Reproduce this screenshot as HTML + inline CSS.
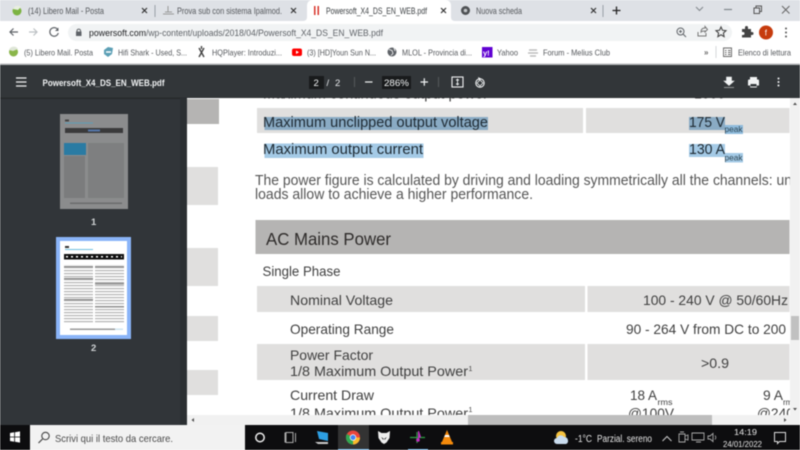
<!DOCTYPE html>
<html><head><meta charset="utf-8"><style>
html,body{margin:0;padding:0;width:800px;height:450px;overflow:hidden;background:#fff}
svg{display:block;filter:blur(.45px)}
text{font-family:"Liberation Sans",sans-serif}
</style></head><body>
<svg xmlns="http://www.w3.org/2000/svg" width="800" height="450" viewBox="0 0 800 450">
<defs><clipPath id="doc"><rect x="187" y="98" width="603" height="317"/></clipPath>
<pattern id="rows" width="4" height="3" patternUnits="userSpaceOnUse"><rect width="4" height="3" fill="#fff"/><rect width="4" height="1.200" fill="#b3b3b3"/></pattern></defs>
<rect width="800" height="450" fill="#fff"/>
<!-- tab strip -->
<rect width="800" height="21" fill="#dee1e6"/>
<path d="M303 21q4 0 4-4V6q0-6 6-6h132q6 0 6 6v11q0 4 4 4z" fill="#fff"/>
<circle cx="17" cy="11" r="4.500" fill="#7cb342"/><path d="M13 9a5 5 0 0 1 8-2l-3 3z" fill="#e8efe0"/>
<text x="28" y="14" font-size="9" fill="#55585c" textLength="76" lengthAdjust="spacingAndGlyphs">(14) Libero Mail - Posta</text>
<path d="M142 8l5 5m0-5l-5 5" stroke="#333" stroke-width="1.200"/>
<rect x="154.500" y="5" width="1" height="12" fill="#9aa0a6"/>
<path d="M163 14h11M165 12h7M168 6v6" stroke="#999" stroke-width="1"/>
<text x="177" y="14" font-size="9" fill="#55585c" textLength="105" lengthAdjust="spacingAndGlyphs">Prova sub con sistema Ipalmod.</text>
<path d="M291 8l5 5m0-5l-5 5" stroke="#333" stroke-width="1.200"/>
<rect x="314" y="6" width="1.500" height="9" fill="#d9342b"/><rect x="317.500" y="6" width="1.500" height="9" fill="#d9342b"/>
<text x="326" y="14" font-size="9" fill="#3c4043" textLength="101" lengthAdjust="spacingAndGlyphs">Powersoft_X4_DS_EN_WEB.pdf</text>
<path d="M441 8l5 5m0-5l-5 5" stroke="#333" stroke-width="1.200"/>
<circle cx="465.500" cy="10.500" r="4.500" fill="#4e5154"/><circle cx="465.500" cy="10.500" r="1.800" fill="#c4c7ca"/>
<text x="476" y="14" font-size="9" fill="#55585c" textLength="46" lengthAdjust="spacingAndGlyphs">Nuova scheda</text>
<path d="M591 8l5 5m0-5l-5 5" stroke="#333" stroke-width="1.200"/>
<rect x="602.500" y="5" width="1" height="12" fill="#9aa0a6"/>
<path d="M612.500 10.500h8M616.500 6.500v8" stroke="#222" stroke-width="1.300"/>
<path d="M696 7l3.500 3.500L703 7" stroke="#80868b" fill="none"/>
<path d="M724 9.500h8" stroke="#80868b" stroke-width="1.200"/>
<path d="M754 8h5.500v5.500H754zM756 8V6h5.500v5.500h-2" stroke="#555" fill="none"/>
<path d="M782 6l7.500 7.500m0-7.500L782 13.500" stroke="#666" fill="none"/>
<!-- address bar -->
<rect y="21" width="800" height="20" fill="#fff"/>
<rect x="68" y="24" width="664" height="17" rx="8.500" fill="#f1f3f4"/>
<path d="M18 32h-8m3.500-3.500L10 32l3.500 3.500" stroke="#5f6368" stroke-width="1.200" fill="none"/>
<path d="M29 32h8m-3.500-3.500L37 32l-3.500 3.500" stroke="#bcc0c4" stroke-width="1.200" fill="none"/>
<path d="M58 30a4.300 4.300 0 1 0 .3 3" stroke="#5f6368" stroke-width="1.200" fill="none"/><path d="M58.500 27.500v3.500H55z" fill="#5f6368"/>
<rect x="76" y="31.500" width="5.500" height="4.500" fill="#5f6368"/><path d="M77 31.500v-1a1.800 1.800 0 0 1 3.500 0v1" stroke="#5f6368" fill="none"/>
<text x="89" y="36" font-size="9.500" fill="#202124" textLength="57" lengthAdjust="spacingAndGlyphs">powersoft.com</text>
<text x="146" y="36" font-size="9.500" fill="#5f6368" textLength="237" lengthAdjust="spacingAndGlyphs">/wp-content/uploads/2018/04/Powersoft_X4_DS_EN_WEB.pdf</text>
<circle cx="680.500" cy="31.500" r="3.500" stroke="#5f6368" fill="none"/><path d="M683 34l3 3M679 31.500h3M680.500 30v3" stroke="#5f6368" fill="none"/>
<path d="M698 32v4h8v-3M701 32c0-3 2-4 4-4v-1.500l2.500 3-2.500 2.500V31c-2 0-3 0-4 1z" stroke="#777" fill="none"/>
<path d="M721 27l1.500 3.300 3.500.4-2.600 2.400.7 3.500-3.100-1.800-3.100 1.800.7-3.500-2.600-2.400 3.500-.4z" stroke="#444" stroke-width="1.100" fill="none"/>
<path d="M742 29h3v-1.500a1.500 1.500 0 0 1 3 0V29h3v3h1a1.500 1.500 0 0 1 0 3h-1v2.500h-9V35h1a1.500 1.500 0 0 0 0-3h-1z" fill="#444"/>
<circle cx="766" cy="32.500" r="7" fill="#c63b0d"/><text x="764.800" y="35.500" font-size="8" fill="#fff">f</text>
<circle cx="786" cy="28.500" r="1" fill="#555"/><circle cx="786" cy="32.500" r="1" fill="#555"/><circle cx="786" cy="36.500" r="1" fill="#555"/>
<!-- bookmarks -->
<rect y="41" width="800" height="23" fill="#fff"/><rect y="63.500" width="800" height="1.500" fill="#b8babc"/>
<circle cx="13.500" cy="52" r="4.500" fill="#8ab64a"/><path d="M9 50a5 5 0 0 1 9-1l-5 2z" fill="#dfe6d8"/>
<text x="24" y="55.500" font-size="8.500" fill="#55585c" textLength="69" lengthAdjust="spacingAndGlyphs">(5) Libero Mail. Posta</text>
<path d="M104 50l4-3 5 1-1 6-4 3-4-3z" fill="#5c9fb5"/><path d="M106 52h5" stroke="#fff" stroke-width="1.500"/>
<text x="118" y="55.500" font-size="8.500" fill="#55585c" textLength="69" lengthAdjust="spacingAndGlyphs">Hifi Shark - Used, S...</text>
<path d="M199 48l5 9m0-9l-5 9M201.500 46v3" stroke="#444" stroke-width="1.400"/>
<text x="212" y="55.500" font-size="8.500" fill="#55585c" textLength="70" lengthAdjust="spacingAndGlyphs">HQPlayer: Introduzi...</text>
<rect x="292" y="48.500" width="10" height="7.500" rx="2" fill="#f00"/><path d="M296 50.500v3.500l3-1.700z" fill="#fff"/>
<text x="307" y="55.500" font-size="8.500" fill="#55585c" textLength="69" lengthAdjust="spacingAndGlyphs">(3) [HD]Youn Sun N...</text>
<circle cx="392" cy="52" r="4.500" fill="#5f6368"/><path d="M389 49.500l3 1 1 3-2 2M394 48l1 3" stroke="#fff" fill="none" stroke-width=".8"/>
<text x="402" y="55.500" font-size="8.500" fill="#55585c" textLength="70" lengthAdjust="spacingAndGlyphs">MLOL - Provincia di...</text>
<rect x="482" y="47" width="10.500" height="10.500" fill="#6001d2"/><text x="483" y="55.500" font-size="7.500" font-weight="bold" fill="#fff">y!</text>
<text x="497" y="55.500" font-size="8.500" fill="#55585c" textLength="21" lengthAdjust="spacingAndGlyphs">Yahoo</text>
<path d="M529 50h8M528 53h10M530 56h6" stroke="#b5b5b5" stroke-width="1.200"/>
<text x="543" y="55.500" font-size="8.500" fill="#55585c" textLength="67" lengthAdjust="spacingAndGlyphs">Forum - Melius Club</text>
<text x="704" y="55" font-size="8" font-weight="bold" fill="#666">»</text>
<rect x="715.500" y="46" width="1" height="12" fill="#d5d7da"/>
<path d="M723.500 48h8v8.500h-8zM725 50.500h1.500M725 52.500h1.500M725 54.500h1.500M728 50.500h2.500M728 52.500h2.500M728 54.500h2.500" stroke="#666" fill="none" stroke-width=".9"/>
<text x="738" y="55.500" font-size="8.500" fill="#55585c" textLength="53" lengthAdjust="spacingAndGlyphs">Elenco di lettura</text>
<!-- pdf toolbar -->
<rect y="65" width="800" height="33" fill="#323639"/>
<path d="M16 78h10.500M16 82h10.500M16 86h10.500" stroke="#f1f3f4" stroke-width="1.300"/>
<text x="42.500" y="86" font-size="9" font-weight="bold" fill="#f1f3f4" textLength="122" lengthAdjust="spacingAndGlyphs">Powersoft_X4_DS_EN_WEB.pdf</text>
<rect x="309" y="76" width="15" height="13" fill="#191b1c"/>
<text x="313.500" y="86" font-size="9.500" fill="#f1f3f4">2</text>
<text x="326.500" y="86" font-size="9.500" fill="#e8eaed">/</text>
<text x="335" y="86" font-size="9.500" fill="#e8eaed">2</text>
<rect x="354" y="77" width="1" height="10" fill="#55595c"/>
<path d="M365 82h7.500" stroke="#f1f3f4" stroke-width="1.200"/>
<rect x="382" y="76" width="29" height="13" fill="#191b1c"/>
<text x="384" y="86" font-size="9.500" fill="#f1f3f4" textLength="25" lengthAdjust="spacingAndGlyphs">286%</text>
<path d="M420.500 82h7.500M424.300 78.200v7.600" stroke="#f1f3f4" stroke-width="1.200"/>
<rect x="438" y="77" width="1" height="10" fill="#55595c"/>
<rect x="452" y="77" width="11" height="10" stroke="#f1f3f4" stroke-width="1.100" fill="none"/><path d="M457.500 78.500v7M456 80h3M456 84h3" stroke="#f1f3f4" stroke-width=".9"/>
<circle cx="480" cy="83" r="4.200" stroke="#f1f3f4" stroke-width="1.100" fill="none"/><path d="M480 80l-3 3 3 3 3-3z" stroke="#f1f3f4" stroke-width=".8" fill="none"/><path d="M478 77l3 1.500-2 2z" fill="#f1f3f4"/>
<path d="M726.500 77h5v4h2.500l-5 4.500-5-4.500h2.500zM724 87.500h10" fill="#f1f3f4" stroke="#f1f3f4" stroke-width=".6"/>
<path d="M750 77h7v2.500h-7z" fill="#f1f3f4"/><path d="M748 80.500a1 1 0 0 1 1-1h9a1 1 0 0 1 1 1v5h-2.200v2h-6.600v-2H748z" fill="#f1f3f4"/><rect x="750.500" y="84" width="6" height="2.500" fill="#323639"/>
<circle cx="778.500" cy="78.500" r="1" fill="#f1f3f4"/><circle cx="778.500" cy="82" r="1" fill="#f1f3f4"/><circle cx="778.500" cy="85.500" r="1" fill="#f1f3f4"/>
<!-- sidebar -->
<rect y="98" width="187" height="327" fill="#313539"/>
<rect x="0" y="97.500" width="800" height="1.500" fill="#26292b"/>
<rect x="60" y="114" width="68" height="95" fill="#8b8c8d"/>
<rect x="65" y="128" width="58" height="5" fill="#3a3a3b"/><rect x="88" y="129.500" width="12" height="2" fill="#5577aa"/>
<rect x="64" y="143" width="22" height="12" fill="#2a7ba3"/>
<rect x="64" y="156" width="21" height="42" fill="#7b7c7d"/><rect x="88" y="143" width="36" height="55" fill="#7e7f80"/>
<rect x="65" y="119.500" width="4" height="2" fill="#444"/><rect x="65" y="122.500" width="28" height="1" fill="#5e9db8"/>
<rect x="70" y="202.500" width="52" height="1.500" fill="#6b6c6d"/>
<text x="91" y="225" font-size="9.500" font-weight="bold" fill="#cfd2d4">1</text>
<rect x="56" y="237" width="75" height="102" fill="#8ab4f8"/>
<rect x="60" y="241" width="67" height="94" fill="#fff"/>
<rect x="64" y="254" width="60" height="5.500" fill="#111"/>
<path d="M66 256.800h56" stroke="#fff" stroke-width="1.500" stroke-dasharray="2 3"/>
<rect x="65" y="246" width="4" height="2" fill="#333"/><rect x="65" y="249" width="28" height="1" fill="#6fbfe0"/>
<rect x="64" y="265" width="29" height="59" fill="url(#rows)"/><rect x="95" y="265" width="29" height="59" fill="url(#rows)"/>
<g fill="#8f8f8f"><rect x="64" y="266" width="29" height="1.500"/><rect x="95" y="266" width="29" height="1.500"/><rect x="64" y="278" width="29" height="1.500"/><rect x="64" y="299" width="29" height="1.500"/><rect x="95" y="283" width="29" height="1.500"/><rect x="95" y="306" width="29" height="1.500"/></g>
<rect x="70" y="328.500" width="45" height="1.500" fill="#999"/><rect x="115" y="328.500" width="8" height="1.500" fill="#cfe6f2"/>
<text x="91" y="351" font-size="9.500" font-weight="bold" fill="#cfd2d4">2</text>
<!-- document -->
<g clip-path="url(#doc)">
<rect x="187" y="98" width="603" height="317" fill="#fff"/>
<rect x="187" y="99" width="32" height="25" fill="#b5b4b3"/>
<rect x="187" y="167" width="31" height="38" fill="#e0dfde"/>
<rect x="187" y="248" width="31" height="38" fill="#e0dfde"/>
<rect x="187" y="316" width="31" height="25" fill="#e0dfde"/>
<rect x="187" y="370" width="31" height="25" fill="#e0dfde"/>
<text x="263" y="98.500" font-size="14" fill="#444" textLength="225" lengthAdjust="spacingAndGlyphs">Maximum continuous output power</text>
<text x="694" y="98.500" font-size="14" fill="#444">1000</text>
<rect x="257" y="108" width="326" height="25" fill="#e0dfde"/>
<rect x="586" y="108" width="203.500" height="25" fill="#e0dfde"/>
<rect x="264.500" y="117" width="223.500" height="13" fill="#8aabc4"/>
<text x="263" y="127" font-size="14.500" fill="#1e2a33" textLength="225" lengthAdjust="spacingAndGlyphs">Maximum unclipped output voltage</text>
<rect x="689" y="117" width="36" height="13" fill="#8aabc4"/><rect x="725" y="125" width="18" height="9" fill="#8fbbdc"/>
<text x="689" y="127" font-size="14.500" fill="#1e2a33" textLength="36" lengthAdjust="spacingAndGlyphs">175 V</text>
<text x="724.500" y="132" font-size="8.500" fill="#2c4452" textLength="18" lengthAdjust="spacingAndGlyphs">peak</text>
<rect x="264.500" y="143.500" width="159" height="14.500" fill="#a4cae6"/><rect x="689" y="144" width="36" height="13" fill="#a4cae6"/><rect x="725" y="153" width="18" height="9.500" fill="#a4cae6"/>
<text x="263" y="154" font-size="14.500" fill="#1e2a33" textLength="160" lengthAdjust="spacingAndGlyphs">Maximum output current</text>
<text x="689" y="154" font-size="14.500" fill="#1e2a33" textLength="36" lengthAdjust="spacingAndGlyphs">130 A</text>
<text x="724.500" y="160.500" font-size="8.500" fill="#2c4452" textLength="18" lengthAdjust="spacingAndGlyphs">peak</text>
<text x="255" y="185" font-size="14.500" fill="#555" textLength="537" lengthAdjust="spacingAndGlyphs">The power figure is calculated by driving and loading symmetrically all the channels: un</text>
<text x="255" y="199" font-size="14.500" fill="#555" textLength="278" lengthAdjust="spacingAndGlyphs">loads allow to achieve a higher performance.</text>
<rect x="255.500" y="220" width="534" height="34" fill="#b5b4b3"/>
<text x="266" y="245" font-size="17.500" fill="#2e2b2a" textLength="125" lengthAdjust="spacingAndGlyphs">AC Mains Power</text>
<text x="262.500" y="276" font-size="14" fill="#3f3f3f" textLength="78" lengthAdjust="spacingAndGlyphs">Single Phase</text>
<rect x="257" y="286" width="328" height="26" fill="#e0dfde"/><rect x="587.500" y="286" width="202" height="26" fill="#e0dfde"/>
<text x="290" y="305" font-size="14" fill="#3f3f3f" textLength="103" lengthAdjust="spacingAndGlyphs">Nominal Voltage</text>
<text x="643" y="305" font-size="14" fill="#3f3f3f" textLength="145" lengthAdjust="spacingAndGlyphs">100 - 240 V @ 50/60Hz</text>
<text x="290" y="334" font-size="14" fill="#3f3f3f" textLength="104" lengthAdjust="spacingAndGlyphs">Operating Range</text>
<text x="626" y="334" font-size="14" fill="#3f3f3f" textLength="160" lengthAdjust="spacingAndGlyphs">90 - 264 V from DC to 200</text>
<rect x="257" y="344" width="328" height="36" fill="#e0dfde"/><rect x="587.500" y="344" width="202" height="36" fill="#e0dfde"/>
<text x="290" y="360" font-size="14" fill="#3f3f3f" textLength="83" lengthAdjust="spacingAndGlyphs">Power Factor</text>
<text x="290" y="376" font-size="14" fill="#3f3f3f" textLength="178" lengthAdjust="spacingAndGlyphs">1/8 Maximum Output Power</text>
<text x="468.500" y="371" font-size="7" fill="#3f3f3f">1</text>
<text x="701" y="368" font-size="14" fill="#3f3f3f" textLength="28" lengthAdjust="spacingAndGlyphs">&gt;0.9</text>
<text x="290" y="400" font-size="14" fill="#3f3f3f" textLength="84" lengthAdjust="spacingAndGlyphs">Current Draw</text>
<text x="290" y="418" font-size="14" fill="#3f3f3f" textLength="178" lengthAdjust="spacingAndGlyphs">1/8 Maximum Output Power</text>
<text x="468.500" y="412" font-size="7" fill="#3f3f3f">1</text>
<text x="630" y="400" font-size="14" fill="#3f3f3f" textLength="27" lengthAdjust="spacingAndGlyphs">18 A</text>
<text x="657.500" y="405" font-size="8" fill="#3f3f3f" textLength="15" lengthAdjust="spacingAndGlyphs">rms</text>
<text x="628" y="418" font-size="14" fill="#3f3f3f" textLength="46" lengthAdjust="spacingAndGlyphs">@100V</text>
<text x="763" y="400" font-size="14" fill="#3f3f3f" textLength="20" lengthAdjust="spacingAndGlyphs">9 A</text>
<text x="783" y="405" font-size="8" fill="#3f3f3f">rms</text>
<text x="757" y="418" font-size="14" fill="#3f3f3f" textLength="46" lengthAdjust="spacingAndGlyphs">@240V</text>
</g>
<rect x="180" y="98" width="7" height="327" fill="#2b2f32"/>
<!-- scrollbars -->
<rect x="790" y="98" width="10" height="327" fill="#f1f1f1"/>
<rect x="791" y="316" width="8" height="24" fill="#c1c1c1"/>
<path d="M795 102.500l2 2.500h-4z" fill="#505050"/>
<path d="M795 410.500l2-2.500h-4z" fill="#505050"/>
<rect x="187" y="415" width="603" height="10" fill="#f1f1f1"/>
<rect x="468" y="415" width="244" height="10" fill="#bdbdbd"/>
<path d="M191.500 420l2.500-2v4z" fill="#505050"/>
<path d="M786.500 420l-2.500-2v4z" fill="#505050"/>
<!-- taskbar -->
<rect y="425" width="800" height="25" fill="#0d0d0f"/>
<path d="M10 433l4.200-.7v4.300H10zM15 432.200l5-.8v5.200h-5zM10 437.400h4.200v4.300L10 441zM15 437.400h5v5.200l-5-.8z" fill="#fff"/>
<rect x="30" y="425" width="215" height="25" fill="#f2f2f2"/>
<circle cx="45.500" cy="436" r="3.700" stroke="#444" stroke-width="1.100" fill="none"/><path d="M42.500 439l-4 4" stroke="#444" stroke-width="1.200"/>
<text x="55" y="442" font-size="10.500" fill="#4a4a4a" textLength="118" lengthAdjust="spacingAndGlyphs">Scrivi qui il testo da cercare.</text>
<circle cx="260" cy="437.500" r="4.200" stroke="#eee" stroke-width="1.500" fill="none"/>
<path d="M286 432.500h7v10h-7zM295.500 433v9M285 432.500v10" stroke="#aaa" fill="none"/>
<path d="M317 431l11 2v8l-9-2z" fill="#2d9fe3"/><path d="M315 442h13v2h-10z" fill="#ccc"/>
<rect x="338" y="425" width="31" height="25" fill="#333"/>
<circle cx="353" cy="437.500" r="7" fill="#e8453c"/><path d="M353 437.500l-6.100-3.500a7 7 0 0 0 6.100 10.500z" fill="#31a852"/><path d="M353 437.500h7a7 7 0 0 1-7 7z" fill="#f9bb2d"/><circle cx="353" cy="437.500" r="3.200" fill="#fff"/><circle cx="353" cy="437.500" r="2.500" fill="#4285f4"/>
<rect x="338" y="449" width="31" height="1" fill="#76b9ed"/>
<path d="M378 431l3.500 2h5l3.500-2-.5 7-3 4.500-2.500 1.500-2.500-1.500-3-4.500z" fill="#eee"/><path d="M381 437l2.500 1.500v1.500zM387 437l-2.500 1.500v1.500z" fill="#111"/>
<path d="M410 437.500h15M417 432v11" stroke="#2e9e44" stroke-width="1.200"/><path d="M418 431v8l3-2-2-6z" fill="#c030c0"/><circle cx="418" cy="440" r="1.800" fill="#c030c0"/>
<rect x="408" y="449" width="20" height="1" fill="#76b9ed"/>
<path d="M447 430l5.500 13h-11z" fill="#f58a0b"/><path d="M445 435h4l.8 2h-5.600z" fill="#fff"/><rect x="441" y="442" width="12" height="2.500" fill="#f58a0b"/>
<circle cx="561" cy="436" r="5" fill="#f5c23e"/><path d="M557 444a3 3 0 0 1 0-6 4 4 0 0 1 7-1 3.500 3.500 0 0 1 4 3.500 3 3 0 0 1-2 3.500z" fill="#c9dcee"/>
<text x="575" y="442" font-size="10" fill="#e6e6e6" textLength="17" lengthAdjust="spacingAndGlyphs">-1°C</text>
<text x="597" y="442" font-size="10" fill="#e6e6e6" textLength="55" lengthAdjust="spacingAndGlyphs">Parzial. sereno</text>
<path d="M662.500 441l4.500-4.500 4.500 4.500" stroke="#ccc" fill="none"/>
<path d="M679 434h6v8h-6zM685 436l3-1v5l-3-1zM680 432h4" stroke="#aaa" fill="none" stroke-width=".9"/>
<path d="M692 433h12v7h-12zM696 442h5" stroke="#aaa" fill="none" stroke-width=".9"/>
<path d="M708 436h2l3-2.500v8l-3-2.500h-2zM715 435.500a3 3 0 0 1 0 4" stroke="#aaa" fill="none" stroke-width=".9"/>
<text x="734" y="435" font-size="8.500" fill="#e6e6e6" textLength="23" lengthAdjust="spacingAndGlyphs">14:19</text>
<text x="723" y="447" font-size="8.500" fill="#e6e6e6" textLength="39" lengthAdjust="spacingAndGlyphs">24/01/2022</text>
<path d="M774.500 432.500h11v9h-6l-2 2v-2h-3z" stroke="#ddd" fill="none"/>
</svg>
</body></html>
